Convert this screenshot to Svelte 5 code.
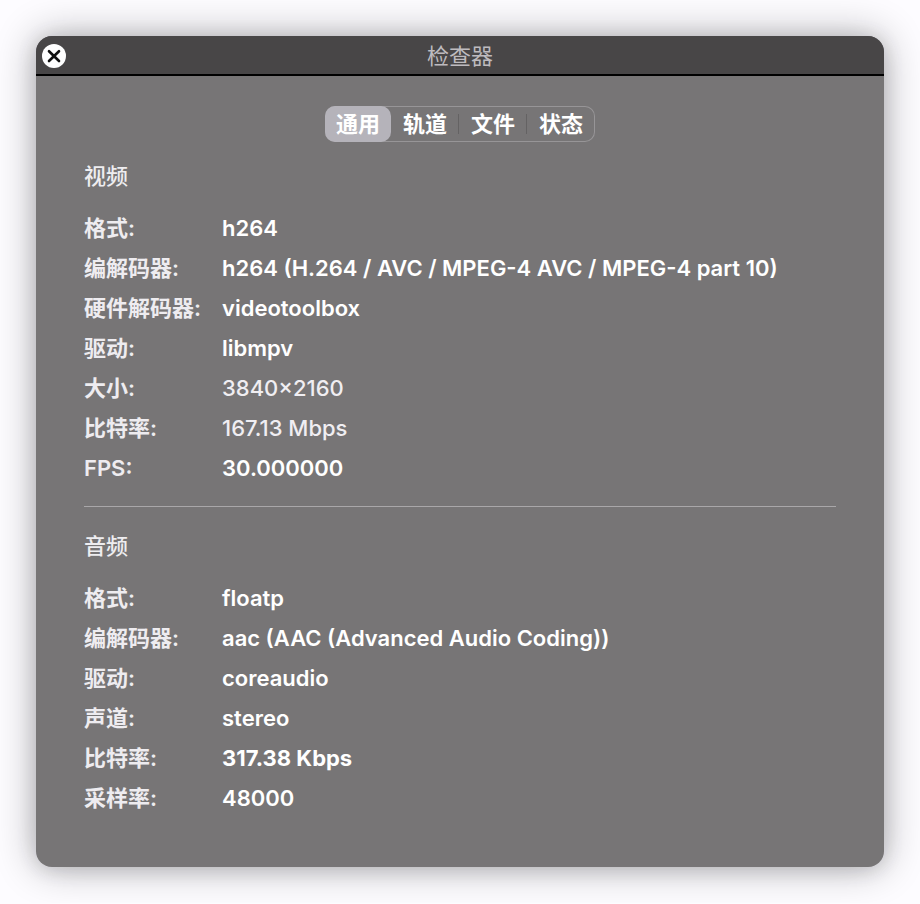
<script lang="ts">
  type Row = { label: string; value: string; tone?: 'regular' | 'strong' };

  const tabs = ['通用', '轨道', '文件', '状态'];
  let active = $state(0);

  const sections: { title: string; rows: Row[] }[] = [
    {
      title: '视频',
      rows: [
        { label: '格式:', value: 'h264' },
        { label: '编解码器:', value: 'h264 (H.264 / AVC / MPEG-4 AVC / MPEG-4 part 10)' },
        { label: '硬件解码器:', value: 'videotoolbox' },
        { label: '驱动:', value: 'libmpv' },
        { label: '大小:', value: '3840×2160', tone: 'regular' },
        { label: '比特率:', value: '167.13 Mbps', tone: 'regular' },
        { label: 'FPS:', value: '30.000000' },
      ],
    },
    {
      title: '音频',
      rows: [
        { label: '格式:', value: 'floatp' },
        { label: '编解码器:', value: 'aac (AAC (Advanced Audio Coding))' },
        { label: '驱动:', value: 'coreaudio' },
        { label: '声道:', value: 'stereo' },
        { label: '比特率:', value: '317.38 Kbps', tone: 'strong' },
        { label: '采样率:', value: '48000' },
      ],
    },
  ];
</script>

<main class="inspector">
  <header>
    <button class="close" type="button" aria-label="关闭">
      <svg viewBox="0 0 24 24" width="24" height="24" aria-hidden="true">
        <path d="M7 7.2 17 17M17 7.2 7 17" />
      </svg>
    </button>
    <h1>检查器</h1>
  </header>

  <div class="content">
    <div class="tabs" role="tablist">
      {#each tabs as tab, i}
        <button
          type="button"
          role="tab"
          aria-selected={active === i}
          class:active={active === i}
          onclick={() => (active = i)}>{tab}</button
        >
      {/each}
    </div>

    {#each sections as section}
      <section>
        <h2>{section.title}</h2>
        <dl>
          {#each section.rows as row}
            <dt>{row.label}</dt>
            <dd class={row.tone}>{row.value}</dd>
          {/each}
        </dl>
      </section>
    {/each}
  </div>
</main>

<style>
  :global(body) {
    background: #fdfcff;
  }

  .inspector {
    margin: 36px;
    border-radius: 16px;
    overflow: hidden;
    color: #fff;
    background: #777576;
    box-shadow:
      0 0 40px rgba(16, 14, 20, 0.32),
      0 2px 20px rgba(16, 14, 20, 0.14);
    font-family: Inter, 'Noto Sans CJK SC', sans-serif;
    font-size: 22px;
    line-height: 40px;
  }

  header {
    position: relative;
    height: 38px;
    border-bottom: 2px solid #000;
    background: #484647;
  }

  h1 {
    margin: 0;
    color: #bebbbf;
    font-size: 22px;
    font-weight: 400;
    text-align: center;
  }

  .close {
    position: absolute;
    top: 8px;
    left: 6px;
    width: 24px;
    height: 24px;
    padding: 0;
    border: none;
    border-radius: 50%;
    background: #fff;
  }

  .close svg {
    display: block;
    fill: none;
    stroke: #111;
    stroke-width: 2.6;
    stroke-linecap: round;
  }

  .content {
    padding: 30px 48px 49px;
  }

  .tabs {
    display: flex;
    width: fit-content;
    margin: 0 auto 14px;
    border-radius: 10px;
    box-shadow: inset 0 0 0 1px #979597;
  }

  .tabs button {
    position: relative;
    height: 36px;
    padding: 0 12px;
    border: none;
    border-radius: 10px;
    color: #fff;
    background: none;
    font: inherit;
    font-weight: 700;
    line-height: 36px;
  }

  .tabs button:first-child {
    padding: 0 11px;
  }

  .tabs button.active {
    background: #b5b3ba;
  }

  .tabs button:not(:first-child):not(:last-child)::after {
    content: '';
    position: absolute;
    top: 8px;
    right: 0;
    width: 1px;
    height: 20px;
    background: #646263;
  }

  section + section {
    margin-top: 18px;
    padding-top: 19px;
    border-top: 1px solid #a9a7a9;
  }

  h2 {
    margin: 0 0 12px;
    color: #eeedf0;
    font-size: 22px;
    font-weight: 500;
  }

  dl {
    display: grid;
    grid-template-columns: 138px 1fr;
    margin: 0;
  }

  dt {
    color: #eeecf0;
    font-weight: 600;
  }

  dd {
    margin: 0;
    font-weight: 600;
  }

  dd.regular {
    color: #f0eef2;
    font-weight: 500;
  }

  dd.strong {
    font-weight: 700;
  }
</style>
